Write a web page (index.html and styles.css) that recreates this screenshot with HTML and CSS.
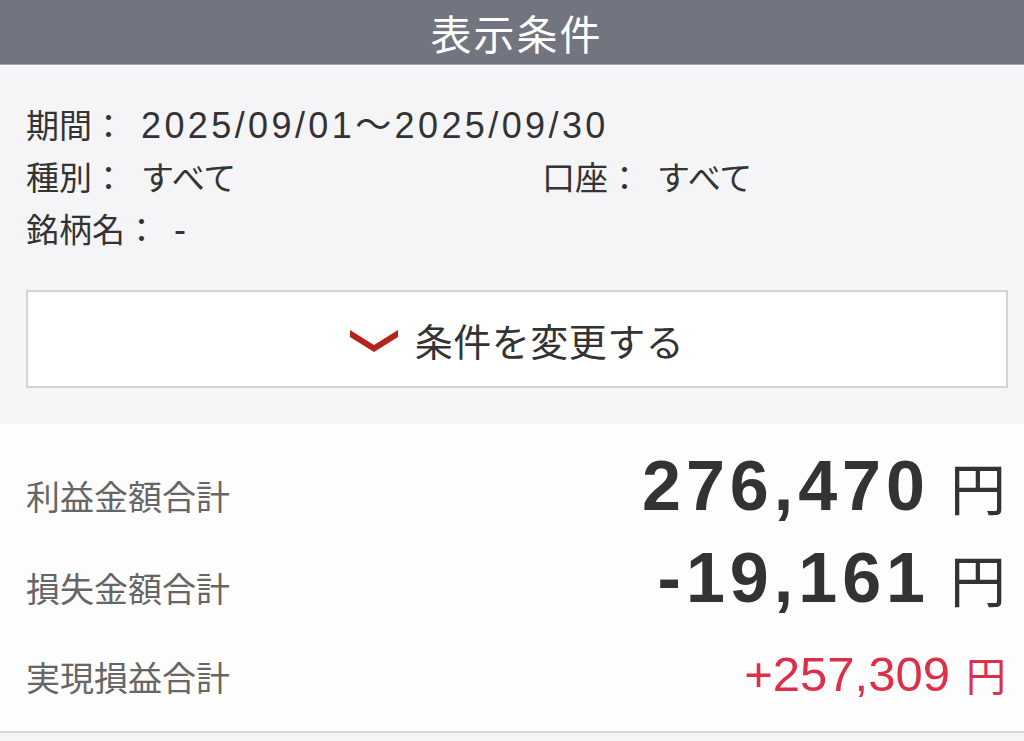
FILE: index.html
```html
<!DOCTYPE html>
<html lang="ja">
<head>
<meta charset="utf-8">
<title>表示条件</title>
<link rel="stylesheet" href="styles.css">
</head>
<body>
<header class="header">表示条件</header>
<section class="conditions">
  <div class="cond-grid">
    <div class="cond full"><span class="cond-label">期間：</span><span class="cond-value latin">2025/09/01～2025/09/30</span></div>
    <div class="cond"><span class="cond-label">種別：</span><span class="cond-value">すべて</span></div>
    <div class="cond"><span class="cond-label">口座：</span><span class="cond-value">すべて</span></div>
    <div class="cond full"><span class="cond-label">銘柄名：</span><span class="cond-value latin">-</span></div>
  </div>
  <button class="change-btn" type="button">
    <svg class="chevron" width="48" height="22" viewBox="0 0 48 22"><path d="M0 0 L24 15 L48 0 L48 7 L24 22 L0 7 Z" fill="#b5231c"/></svg>
    <span>条件を変更する</span>
  </button>
</section>
<section class="results">
  <div class="row row-profit">
    <span class="row-label">利益金額合計</span>
    <span class="row-value big">276,470<span class="yen yen-big">円</span></span>
  </div>
  <div class="row row-loss">
    <span class="row-label">損失金額合計</span>
    <span class="row-value big">-19,161<span class="yen yen-big">円</span></span>
  </div>
  <div class="row row-total">
    <span class="row-label">実現損益合計</span>
    <span class="row-value total">+257,309<span class="yen yen-small">円</span></span>
  </div>
</section>
</body>
</html>
```
FILE: styles.css
```css
html, body {
  margin: 0;
  padding: 0;
}
body {
  width: 1024px;
  height: 741px;
  overflow: hidden;
  background: #f5f5f7;
  font-family: "Noto Sans CJK JP", "Liberation Sans", sans-serif;
  color: #333;
}
.header {
  height: 64px;
  line-height: 64px;
  padding-left: 9px;
  background: #72747f;
  border-bottom: 1px solid #a2a4ac;
  color: #fff;
  font-size: 41px;
  text-align: center;
  letter-spacing: 2px;
}
.conditions {
  background: #f5f5f7;
  padding: 33px 16px 36px 26px;
}
.cond-grid {
  display: grid;
  grid-template-columns: 516px 1fr;
}
.cond {
  display: flex;
  align-items: baseline;
  height: 52px;
  line-height: 52px;
  font-size: 33px;
  color: #333;
}
.cond.full {
  grid-column: 1 / span 2;
}
.cond-label {
  margin-right: 16px;
}
.latin {
  font-family: "Liberation Sans", "Noto Sans CJK JP", sans-serif;
  font-size: 36px;
  letter-spacing: 3.4px;
}
.change-btn {
  display: flex;
  align-items: center;
  justify-content: center;
  gap: 17px;
  width: 982px;
  height: 98px;
  margin: 36px 0 0 0;
  padding: 0 0 0 0;
  background: #fff;
  border: 2px solid #d3d3d5;
  font-family: "Noto Sans CJK JP", sans-serif;
  font-size: 38px;
  color: #333;
  letter-spacing: 0.5px;
}
.chevron {
  display: block;
  margin-top: 4px;
}
.results {
  background: #fdfdfd;
  padding: 16px 18px 8px 26px;
  border-bottom: 2px solid #d8d8d8;
}
.row {
  display: flex;
  justify-content: space-between;
  align-items: baseline;
}
.row-label {
  font-size: 34px;
  line-height: 40px;
  color: #666;
}
.row-value {
  font-family: "Liberation Sans", "Noto Sans CJK JP", sans-serif;
  color: #333;
}
.big {
  font-size: 70px;
  font-weight: bold;
  letter-spacing: 5px;
}
.row-profit .big { line-height: 92px; }
.row-loss .big { line-height: 93px; }
.total {
  font-size: 49px;
  line-height: 98px;
  color: #dc2f48;
}
.yen {
  font-family: "Noto Sans CJK JP", sans-serif;
  font-weight: normal;
  line-height: 1;
  letter-spacing: 0;
}
.yen-big {
  font-size: 56px;
  margin-left: 20px;
}
.yen-small {
  font-size: 40px;
  margin-left: 16px;
}
```
